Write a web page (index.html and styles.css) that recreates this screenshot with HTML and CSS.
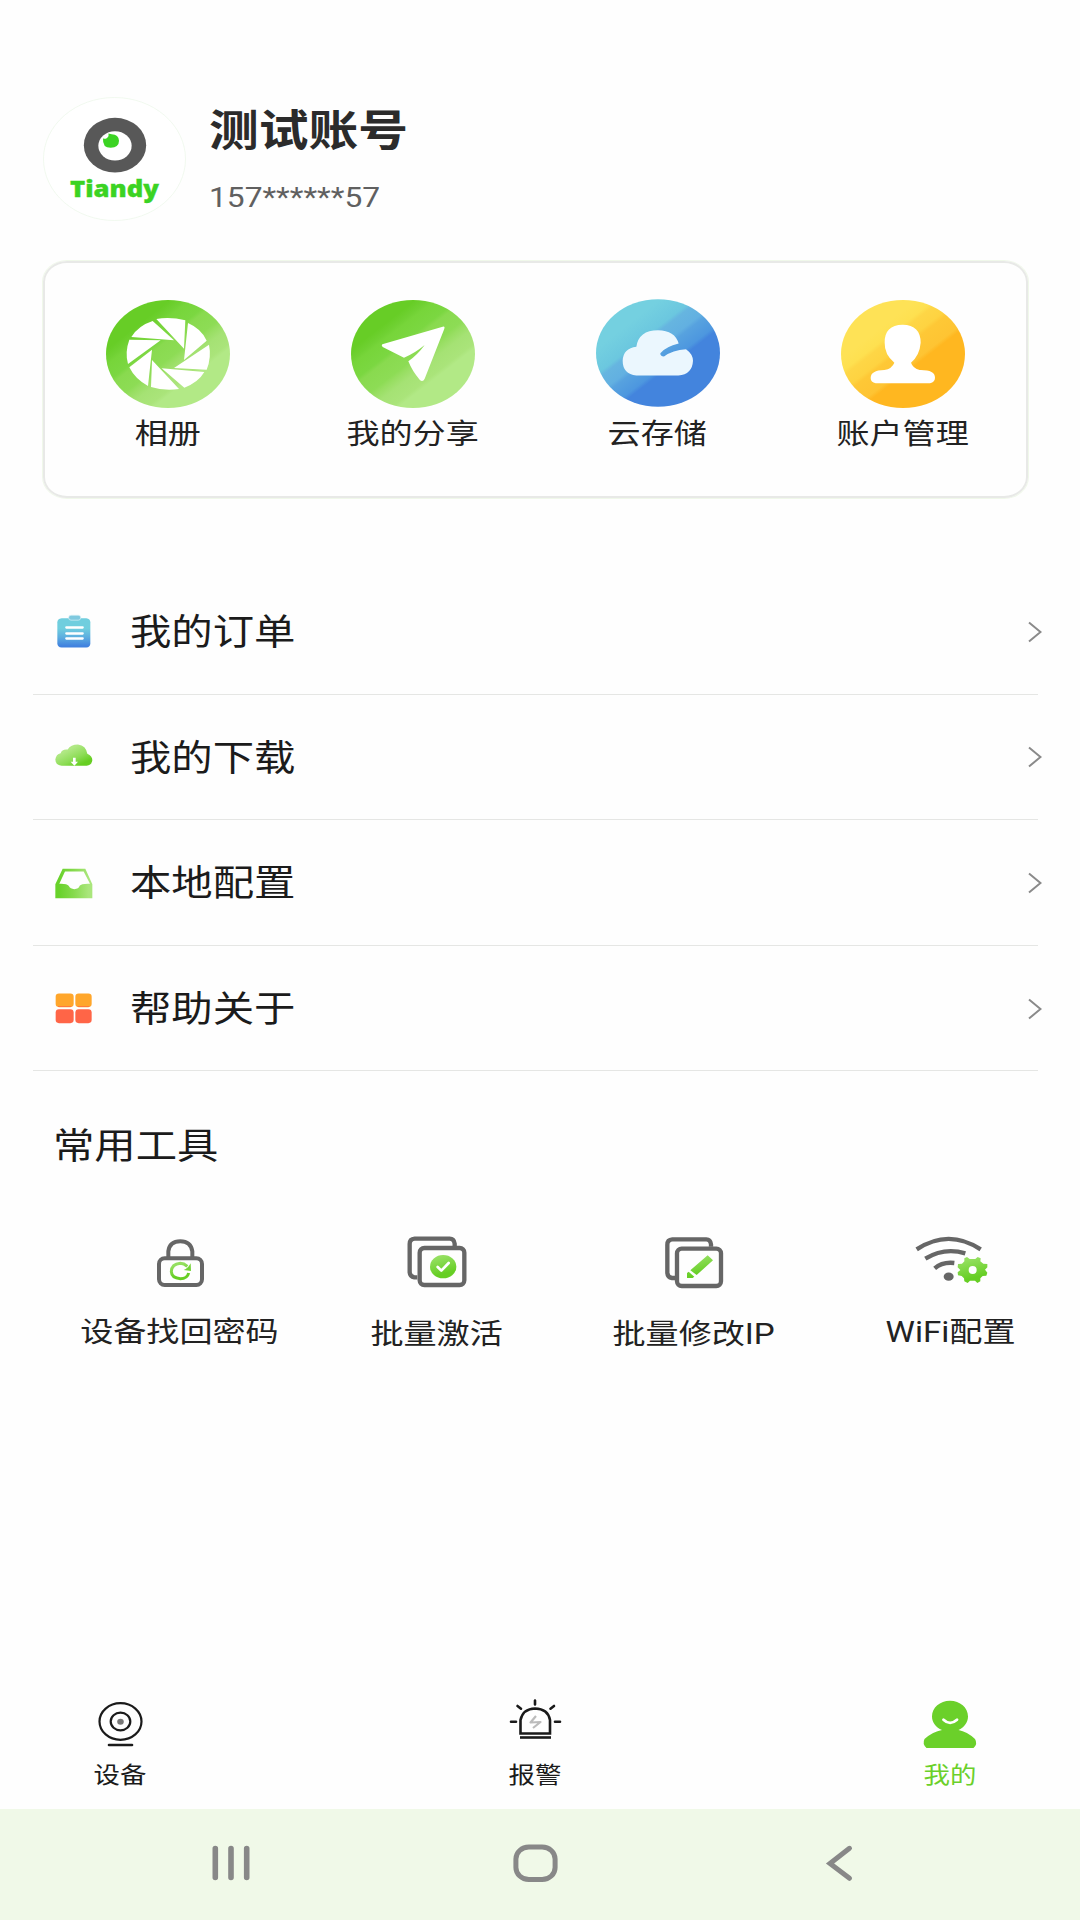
FILE: index.html
```html
<!DOCTYPE html>
<html lang="zh-CN">
<head>
<meta charset="utf-8">
<title>我的</title>
<link rel="stylesheet" href="styles.css">
</head>
<body>
<svg class="defs" width="0" height="0" aria-hidden="true">
  <defs>
    <linearGradient id="green" x1="0.1" y1="0.05" x2="0.9" y2="0.95">
      <stop offset="0.2" stop-color="#67cd26"/><stop offset="0.26" stop-color="#70d133"/><stop offset="0.29" stop-color="#77d53a"/><stop offset="0.39" stop-color="#7bd741"/><stop offset="0.42" stop-color="#89da4f"/><stop offset="0.53" stop-color="#8ddc55"/><stop offset="0.56" stop-color="#97de61"/><stop offset="0.62" stop-color="#a5e274"/><stop offset="0.71" stop-color="#aae47a"/><stop offset="0.74" stop-color="#b2e986"/>
    </linearGradient>
    <linearGradient id="blue" x1="0.1" y1="0.05" x2="0.9" y2="0.95">
      <stop offset="0.2" stop-color="#74d0e0"/><stop offset="0.35" stop-color="#6bc7df"/><stop offset="0.38" stop-color="#66b5e0"/><stop offset="0.47" stop-color="#62b0e1"/><stop offset="0.5" stop-color="#57a2df"/><stop offset="0.6" stop-color="#4d97df"/><stop offset="0.63" stop-color="#4384dd"/>
    </linearGradient>
    <linearGradient id="yellow" x1="0.1" y1="0.05" x2="0.9" y2="0.95">
      <stop offset="0.25" stop-color="#fee256"/><stop offset="0.33" stop-color="#fee050"/><stop offset="0.36" stop-color="#fed646"/><stop offset="0.44" stop-color="#fed341"/><stop offset="0.47" stop-color="#fec836"/><stop offset="0.59" stop-color="#fec433"/><stop offset="0.62" stop-color="#ffb720"/>
    </linearGradient>
    <linearGradient id="sheet" x1="0" y1="0" x2="0" y2="1"><stop offset="0.35" stop-color="#70cede"/><stop offset="0.65" stop-color="#5daee0"/><stop offset="0.95" stop-color="#4182df"/></linearGradient>
    <linearGradient id="cloud" x1="0.2" y1="0.1" x2="0.9" y2="0.9"><stop offset="0.2" stop-color="#b0e884"/><stop offset="0.6" stop-color="#8cdc55"/><stop offset="0.9" stop-color="#66ce22"/></linearGradient>
    <linearGradient id="tray"><stop offset="0.1" stop-color="#68d22b"/><stop offset="0.5" stop-color="#86da4d"/><stop offset="0.9" stop-color="#aae67c"/></linearGradient>
    <linearGradient id="tool" x1="0.3" y1="0" x2="0.6" y2="1"><stop offset="0.1" stop-color="#94df60"/><stop offset="0.8" stop-color="#66ce24"/></linearGradient>
  </defs>
</svg>

<main class="content">
  <header class="profile">
    <svg class="avatar" viewBox="69 51 429 371">
      <ellipse cx="283.500" cy="236.500" rx="213" ry="184.500" fill="#fff" stroke="#eef8ec" stroke-width="2.500"/>
      <ellipse cx="285" cy="195" rx="93.500" ry="82" fill="#585858"/>
      <ellipse cx="285" cy="197" rx="50" ry="44" fill="#fff"/>
      <path fill="#3bd323" d="M249 174Q247 203 272 203Q297 202 297 182Q296 162 275 162L265 160Q268 170 260 174Q254 177 249 174Z"/>
      <text class="brand" x="150" y="350" textLength="267" lengthAdjust="spacingAndGlyphs">Tiandy</text>
    </svg>
    <div class="identity">
      <h1 class="name">测试账号</h1>
      <p class="phone">157******57</p>
    </div>
  </header>

  <section class="card">
    <a class="shortcut">
      <svg class="disc" viewBox="228 148 372 324">
        <ellipse cx="414" cy="310" rx="186" ry="162" fill="url(#green)"/>
        <path fill="#fff" d="M379 205Q420 197 466 209L462 294ZM474 217Q515 235 530 270L462 328ZM537 282Q545 320 530 357L432 352ZM523 364Q505 395 463 411L395 353ZM447 415Q405 422 363 409L366 328ZM354 406Q315 385 298 350L366 297ZM294 340Q284 305 298 267L392 269ZM304 259Q325 225 368 211L432 269Z"/>
      </svg>
      <span class="label">相册</span>
    </a>
    <a class="shortcut">
      <svg class="disc" viewBox="960 148 372 324">
        <ellipse cx="1146" cy="310" rx="186" ry="162" fill="url(#green)"/>
        <path fill="#fff" d="M1054 281L1235 228Q1243 226 1240 234L1181 384Q1175 397 1166 387Q1144 362 1132 332Q1160 312 1181 283Q1151 308 1119 321L1055 289Q1050 284 1054 281Z"/>
      </svg>
      <span class="label">我的分享</span>
    </a>
    <a class="shortcut">
      <svg class="disc disc-cloud" viewBox="168 147 372 323">
        <ellipse cx="354" cy="308.500" rx="186" ry="161.500" fill="url(#blue)"/>
        <path fill="#ebf7fe" d="M289 376Q248 372 248 331Q250 295 289 290Q296 240 354 240Q405 241 416 280Q378 289 361 309Q360 318 372 319Q398 299 438 297Q459 312 459 332Q457 373 415 376Z"/>
      </svg>
      <span class="label">云存储</span>
    </a>
    <a class="shortcut">
      <svg class="disc" viewBox="902 150 372 324">
        <ellipse cx="1088" cy="312" rx="186" ry="162" fill="url(#yellow)"/>
        <path fill="#fff" d="M1087 224Q1141 225 1141 278Q1138 316 1112 338Q1118 355 1138 360Q1184 359 1184 383Q1184 396 1169 400H1006Q991 397 991 384Q991 361 1032 360Q1055 356 1062 338Q1032 313 1033 278Q1032 225 1087 224Z"/>
      </svg>
      <span class="label">账户管理</span>
    </a>
  </section>

  <nav class="menu">
    <a class="row">
      <svg class="row-icon" viewBox="104 71 114 110">
        <path fill="url(#sheet)" d="M124 86H198Q210 87 210 98V161Q210 173 198 174H124Q111 173 111 161V98Q111 87 124 86Z"/>
        <rect x="145" y="77" width="36" height="15" rx="7" fill="#7fc9df" stroke="#ddf3f7" stroke-width="2"/>
        <path stroke="#fff" stroke-width="7" stroke-linecap="round" d="M138 114H187M138 132H187M138 147H187"/>
      </svg>
      <span class="row-text">我的订单</span>
      <svg class="chevron" viewBox="0 0 14 22"><path d="M1 1.500L12.500 11L1 20.500"/></svg>
    </a>
    <a class="row">
      <svg class="row-icon" viewBox="104 445 114 110">
        <path fill="url(#cloud)" d="M124 528Q105 525 105 509Q107 493 121 490Q125 477 142 479Q151 464 173 464Q197 467 201 492Q216 499 216 511Q215 525 199 528Z"/>
        <path fill="#fff" d="M158 504H166V516H173L162 528L151 516H158Z"/>
      </svg>
      <span class="row-text">我的下载</span>
      <svg class="chevron" viewBox="0 0 14 22"><path d="M1 1.500L12.500 11L1 20.500"/></svg>
    </a>
    <a class="row">
      <svg class="row-icon" viewBox="104 72 114 110">
        <path fill="url(#tray)" fill-rule="evenodd" d="M127 86H195L216 132V174H105V132ZM134 94L117 131Q140 130 145 137Q150 147 162 147Q175 147 178 137Q183 130 209 131L190 94Z"/>
      </svg>
      <span class="row-text">本地配置</span>
      <svg class="chevron" viewBox="0 0 14 22"><path d="M1 1.500L12.500 11L1 20.500"/></svg>
    </a>
    <a class="row">
      <svg class="row-icon" viewBox="104 450 114 110">
        <rect x="106" y="460" width="54" height="41" rx="10" fill="#ffa62b"/><rect x="165" y="460" width="49" height="41" rx="10" fill="#ffa62b"/>
        <path stroke="#ff7a3d" stroke-width="3" d="M113 499H153M172 499H207"/>
        <rect x="106" y="507" width="54" height="42" rx="10" fill="#ff6547"/><rect x="165" y="507" width="49" height="42" rx="10" fill="#ff6547"/>
      </svg>
      <span class="row-text">帮助关于</span>
      <svg class="chevron" viewBox="0 0 14 22"><path d="M1 1.500L12.500 11L1 20.500"/></svg>
    </a>
  </nav>

  <section class="tools">
    <h2 class="tools-title">常用工具</h2>
    <div class="tool-list">
      <a class="tool">
        <svg class="tool-icon" viewBox="246 72 228 168">
          <g fill="none" stroke="#666" stroke-width="12"><path d="M325 142V124Q329 94 361 94Q392 94 397 124V142"/><rect x="297" y="145" width="129" height="80" rx="17"/></g>
          <path fill="none" stroke="url(#tool)" stroke-width="9" d="M386 189Q382 206 361 206Q335 204 334 185Q335 162 361 160Q372 160 382 169"/>
          <path fill="#74d338" d="M392 160L393 183L371 180Q384 175 392 160Z"/>
        </svg>
        <span class="label">设备找回密码</span>
      </a>
      <a class="tool tool-low">
        <svg class="tool-icon" viewBox="1016 72 228 168">
          <g fill="none" stroke="#666" stroke-width="13"><path d="M1183 108V101Q1181 86 1168 86H1063Q1048 87 1048 102V187Q1049 200 1062 202H1071"/><rect x="1078" y="114" width="134" height="111" rx="14"/></g>
          <ellipse cx="1148.500" cy="170" rx="39.500" ry="35" fill="url(#tool)"/>
          <path fill="none" stroke="#fff" stroke-width="8" stroke-linecap="round" stroke-linejoin="round" d="M1132 171L1143 182L1165 159"/>
        </svg>
        <span class="label">批量激活</span>
      </a>
      <a class="tool tool-low">
        <svg class="tool-icon" viewBox="228 72 228 168">
          <g fill="none" stroke="#666" stroke-width="13"><path d="M393 110V103Q391 88 379 88H277Q262 89 262 104V189Q263 202 276 204H285"/><rect x="291" y="116" width="132" height="112" rx="14"/></g>
          <path fill="url(#tool)" d="M383 136L399 151L350 195L331 181ZM326 185L343 200L338 204H321V189Z"/>
        </svg>
        <span class="label">批量修改IP</span>
      </a>
      <a class="tool">
        <svg class="tool-icon" viewBox="1000 72 228 168">
          <g fill="none" stroke="#666" stroke-width="13"><path d="M1011 118Q1107 55 1203 118"/><path d="M1037 146Q1094 111 1157 130"/><path d="M1065 175Q1088 155 1124 159"/></g>
          <ellipse cx="1107" cy="200" rx="15" ry="12.500" fill="#666"/>
          <path fill="url(#tool)" fill-rule="evenodd" d="M1162 141L1170 147H1187L1194 141L1203 145L1202 154L1211 161L1223 162V172L1216 179L1223 188L1220 197L1209 198L1202 205V214L1193 219L1186 212H1171L1164 219L1154 214L1153 205L1146 198L1135 196L1134 187L1142 180L1134 172L1135 162L1147 161L1154 154V145ZM1179 168A12 12 0 1 0 1179 192A12 12 0 1 0 1179 168Z"/>
        </svg>
        <span class="label">WiFi配置</span>
      </a>
    </div>
  </section>
</main>

<nav class="tabs">
  <a class="tab">
    <svg class="tab-icon" viewBox="0 0 60 52"><g fill="none" stroke="#1a1a1a" stroke-width="2.200"><ellipse cx="30.500" cy="23.500" rx="21" ry="18.300"/><ellipse cx="30.500" cy="23.500" rx="9.800" ry="8.800"/><path stroke-width="2.600" stroke-linecap="round" d="M19 47H42"/></g><ellipse cx="30.500" cy="23.700" rx="3.300" ry="3" fill="#777"/></svg>
    <span class="tab-text">设备</span>
  </a>
  <a class="tab">
    <svg class="tab-icon" viewBox="0 0 60 52"><g fill="none" stroke="#1a1a1a" stroke-width="2.600"><path d="M15.500 35.500V22Q18 10.800 30 10.500Q43 10.800 45 22V35.500Z"/><path d="M15 39.500H46"/><path stroke-linecap="round" d="M30 2.500V6.500M12.500 8L16 10.700M49 8L45.500 10.700M6 23.800H11M50 23.800H55"/></g><path fill="none" stroke="#bbb" stroke-width="2.200" stroke-linejoin="round" d="M31 18L25.500 24.500L35.500 24L28 30"/></svg>
    <span class="tab-text">报警</span>
  </a>
  <a class="tab tab-active">
    <svg class="tab-icon" viewBox="0 0 60 52"><path fill="#6bd02a" d="M30 2.700C40 2.700 48 9.500 48 18.500C48 24.500 44 29.500 38.500 32Q47 33.500 55 41Q58 46 53.500 50H6.500Q2 46 4.500 41Q13 33.500 22 32C16 29.500 12 24.500 12 18.500C12 9.500 20 2.700 30 2.700Z"/><path fill="none" stroke="#fff" stroke-width="2.800" stroke-linecap="round" d="M23.500 21.700Q30 28 37 21.700"/></svg>
    <span class="tab-text">我的</span>
  </a>
</nav>

<footer class="system-bar">
  <svg class="key" viewBox="0 0 50 40"><path fill="none" stroke="#888" stroke-width="5.600" stroke-linecap="round" d="M9.300 5.500V34.500M25 5.500V34.500M40.700 5.500V34.500"/></svg>
  <svg class="key" viewBox="0 0 50 40"><rect x="4.900" y="4" width="39.200" height="32.500" rx="13" ry="12" fill="none" stroke="#888" stroke-width="5"/></svg>
  <svg class="key" viewBox="0 0 50 40"><path fill="none" stroke="#888" stroke-width="5" stroke-linecap="round" d="M34.500 5.300L15 20.500L34.500 35.300"/></svg>
</footer>
</body>
</html>
```
FILE: styles.css
```css
* { box-sizing: border-box; }

body {
  margin: 0;
  width: 1080px;
  height: 1920px;
  display: flex;
  flex-direction: column;
  background: #fefefe;
  color: #222;
  font-family: Roboto, "Noto Sans CJK SC", sans-serif;
  overflow: hidden;
}

.defs { position: absolute; }
svg { display: block; flex: none; }
h1, h2, p { margin: 0; font-weight: 400; }

/* wide letterforms */
.name, .phone, .label, .row-text, .tools-title, .tab-text {
  transform: scaleX(1.149);
  white-space: nowrap;
}
.name, .phone, .row-text, .tools-title { transform-origin: left center; }

.content { flex: 1; }

.profile {
  display: flex;
  height: 261px;
  padding: 97px 0 0 43px;
}
.avatar { width: 143px; height: 124px; }
.brand {
  font-family: "Open Sans", sans-serif;
  font-weight: 800;
  font-size: 67px;
  fill: #3bd323;
  stroke: #3bd323;
  stroke-width: 1px;
}
.identity { padding: 4px 0 0 23px; }
.name {
  font-size: 43.3px;
  font-weight: 700;
  line-height: 62px;
  color: #2b2b2b;
}
.phone {
  margin-top: 15px;
  font-size: 27.6px;
  line-height: 40px;
  color: #606060;
}

.card {
  display: flex;
  width: 985px;
  height: 237px;
  margin-left: 43px;
  padding: 37px 1px 0 0;
  border: 2px solid #e8e9e7;
  border-radius: 24px / 21px;
  box-shadow: 0 0 0 1px #f0f8ea;
}
.shortcut {
  flex: 1;
  display: flex;
  flex-direction: column;
  align-items: center;
}
.disc { width: 124px; height: 108px; }
.disc-cloud { margin-top: -1px; margin-bottom: 1px; }
.label {
  font-size: 28.8px;
  line-height: 40px;
}
.shortcut .label { margin-top: 6px; }

.menu {
  margin: 71px 42px 0 33px;
}
.row {
  display: flex;
  align-items: center;
  height: 125.6px;
  padding-left: 21.5px;
  border-bottom: 1px solid #e5e6e4;
}
.row-icon { width: 38px; height: 37px; }
.row-text {
  flex: 1;
  margin-left: 37px;
  padding-top: 4px;
  font-size: 36px;
  line-height: 50px;
  color: #1b1b1b;
  max-width: 150px;
}
.chevron {
  width: 14px;
  height: 22px;
  margin: 1px -4px 0 auto;
  fill: none;
  stroke: #8a8a8a;
  stroke-width: 2;
}

.tools { padding-top: 51px; }
.tools-title {
  margin-left: 53px;
  width: 150px;
  font-size: 36px;
  line-height: 50px;
  color: #1b1b1b;
}
.tool-list {
  display: flex;
  margin: 62px 0 0 51px;
}
.tool {
  width: 257px;
  display: flex;
  flex-direction: column;
  align-items: center;
}
.tool-icon { width: 76px; height: 56px; }
.tool .label { margin-top: 22px; }
.tool-low .label { margin-top: 24px; }

.tabs {
  display: flex;
  justify-content: space-between;
  height: 111px;
  padding: 0 70px 0 60px;
}
.tab {
  width: 120px;
  display: flex;
  flex-direction: column;
  align-items: center;
}
.tab-icon { width: 60px; height: 52px; }
.tab-text {
  margin-top: 9px;
  font-size: 23px;
  line-height: 34px;
  color: #1b1b1b;
}
.tab-active .tab-text { color: #6bd02a; }

.system-bar {
  display: flex;
  justify-content: space-between;
  align-items: center;
  height: 111px;
  padding: 0 215px 3px 206px;
  background: #f0f9e8;
}
.key { width: 50px; height: 40px; }
```
